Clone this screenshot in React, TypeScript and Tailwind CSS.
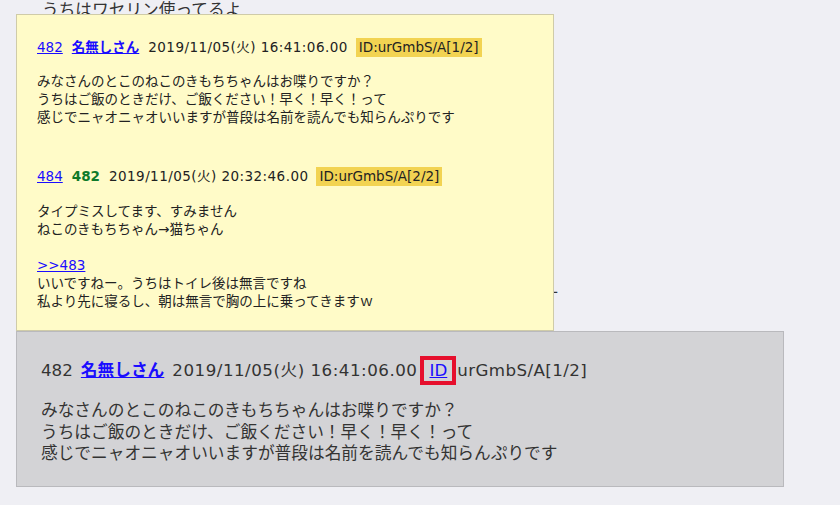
import React from "react";

const jp = "font-['DejaVu_Sans','Noto_Sans_CJK_JP',sans-serif]";

const Link: React.FC<{ children: React.ReactNode; bold?: boolean }> = ({ children, bold }) => (
    <span className={`text-[#1a0dff] underline ${bold ? "font-bold" : ""}`}>{children}</span>
);

export default function App() {
    return (
        <div className={`relative min-h-[506px] w-[840px] bg-[#efeff4] text-[#333] ${jp}`}>
            {/* thread behind the popup */}
            <div className="h-[332px] pl-[42px] text-[16.7px] leading-[22px]">
                <div className="-mt-[1px]">うちはワセリン使ってるよ</div>
                <div className="mt-[265px]">感じでニャオニャオいいますが普段は名前を読んでも知らんぷりです</div>
            </div>

            {/* referenced post */}
            <div className="ml-[16px] w-[768px] border border-[#b9b9bd] bg-[#d3d3d6] pl-[24px] pt-[24px] pb-[21px] text-[16.7px]">
                <div className="flex items-center leading-[23px] whitespace-nowrap">
                    <span>482</span>
                    <span className="ml-[8px]"><Link bold>名無しさん</Link></span>
                    <span className="ml-[8px] tracking-[0.5px]">2019/11/05(火) 16:41:06.00</span>
                    <span className="ml-[3px] inline-block h-[29px] border-[4px] border-[#e60f2d] px-[5px] leading-[21px]">
                        <Link>ID</Link>
                    </span>
                    <span className="ml-[1px] tracking-[0.4px]">urGmbS/A[1/2]</span>
                </div>
                <div className="mt-[15px] leading-[21.5px]">
                    <div>みなさんのとこのねこのきもちちゃんはお喋りですか？</div>
                    <div>うちはご飯のときだけ、ご飯ください！早く！早く！って</div>
                    <div>感じでニャオニャオいいますが普段は名前を読んでも知らんぷりです</div>
                </div>
            </div>

            {/* popup */}
            <div className="absolute left-[16px] top-[15px] w-[538px] border border-[#cfcba8] bg-[#fffbc8] pl-[20px] pt-[23px] pb-[20px] text-[13.5px] text-[#222]">
                <div className="flex items-center h-[19px] whitespace-nowrap">
                    <Link>482</Link>
                    <span className="ml-[9px]"><Link bold>名無しさん</Link></span>
                    <span className="ml-[9px] tracking-[0.45px]">2019/11/05(火) 16:41:06.00</span>
                    <span className="ml-[8px] bg-[#f2d352] px-[3px] leading-[19px]">ID:urGmbS/A[1/2]</span>
                </div>
                <div className="mt-[15px] leading-[18px]">
                    <div>みなさんのとこのねこのきもちちゃんはお喋りですか？</div>
                    <div>うちはご飯のときだけ、ご飯ください！早く！早く！って</div>
                    <div>感じでニャオニャオいいますが普段は名前を読んでも知らんぷりです</div>
                </div>

                <div className="mt-[41px] flex items-center h-[19px] whitespace-nowrap">
                    <Link>484</Link>
                    <span className="ml-[9px] font-bold text-[#0f7a2a]">482</span>
                    <span className="ml-[9px] tracking-[0.45px]">2019/11/05(火) 20:32:46.00</span>
                    <span className="ml-[8px] bg-[#f2d352] px-[3px] leading-[19px]">ID:urGmbS/A[2/2]</span>
                </div>
                <div className="mt-[16px] leading-[18px]">
                    <div>タイプミスしてます、すみません</div>
                    <div>ねこのきもちちゃん→猫ちゃん</div>
                    <div className="h-[18px]" />
                    <div><Link>&gt;&gt;483</Link></div>
                    <div>いいですねー。うちはトイレ後は無言ですね</div>
                    <div>私より先に寝るし、朝は無言で胸の上に乗ってきますｗ</div>
                </div>
            </div>
        </div>
    );
}
